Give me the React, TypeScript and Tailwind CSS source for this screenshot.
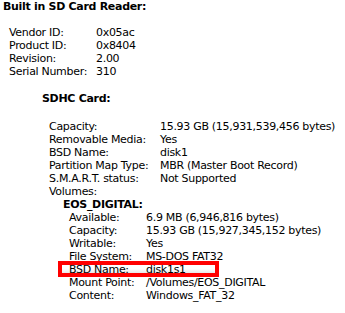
import React from "react";

const font = { fontFamily: '"DejaVu Sans", "Lucida Grande", sans-serif' };

function Row({ label, value, labelW, boxed }: { label: string; value: string; labelW: string; boxed?: boolean }) {
  return (
    <div className="relative flex h-[13px] leading-[13px] whitespace-nowrap">
      {boxed && (
        <div className="absolute left-[-11px] top-[-2px] h-[16px] w-[161px] border-4 border-[#ff0000] bg-gradient-to-b from-white via-white to-[#e8e8e8]" />
      )}
      <span className={`relative ${labelW}`}>{label}</span>
      <span className="relative">{value}</span>
    </div>
  );
}

export default function App() {
  return (
    <div className="w-[345px] h-[313px] bg-white text-black text-[11px] leading-[13px] tracking-[-0.3px] overflow-hidden pl-[3px]" style={font}>
      <div className="font-bold h-[13px]">Built in SD Card Reader:</div>
      <div className="pl-[6px] mt-[13px]">
        <Row label="Vendor ID:" value="0x05ac" labelW="w-[87px]" />
        <Row label="Product ID:" value="0x8404" labelW="w-[87px]" />
        <Row label="Revision:" value="2.00" labelW="w-[87px]" />
        <Row label="Serial Number:" value="310" labelW="w-[87px]" />
      </div>
      <div className="pl-[39px] mt-[14px] font-bold h-[13px]">SDHC Card:</div>
      <div className="pl-[46px] mt-[15px]">
        <Row label="Capacity:" value="15.93 GB (15,931,539,456 bytes)" labelW="w-[111px]" />
        <Row label="Removable Media:" value="Yes" labelW="w-[111px]" />
        <Row label="BSD Name:" value="disk1" labelW="w-[111px]" />
        <Row label="Partition Map Type:" value="MBR (Master Boot Record)" labelW="w-[111px]" />
        <Row label="S.M.A.R.T. status:" value="Not Supported" labelW="w-[111px]" />
        <div className="h-[13px]">Volumes:</div>
        <div className="pl-[14px] font-bold h-[13px]">EOS_DIGITAL:</div>
        <div className="pl-[20px]">
          <Row label="Available:" value="6.9 MB (6,946,816 bytes)" labelW="w-[77px]" />
          <Row label="Capacity:" value="15.93 GB (15,927,345,152 bytes)" labelW="w-[77px]" />
          <Row label="Writable:" value="Yes" labelW="w-[77px]" />
          <Row label="File System:" value="MS-DOS FAT32" labelW="w-[77px]" />
          <Row label="BSD Name:" value="disk1s1" labelW="w-[77px]" boxed />
          <Row label="Mount Point:" value="/Volumes/EOS_DIGITAL" labelW="w-[77px]" />
          <Row label="Content:" value="Windows_FAT_32" labelW="w-[77px]" />
        </div>
      </div>
    </div>
  );
}
